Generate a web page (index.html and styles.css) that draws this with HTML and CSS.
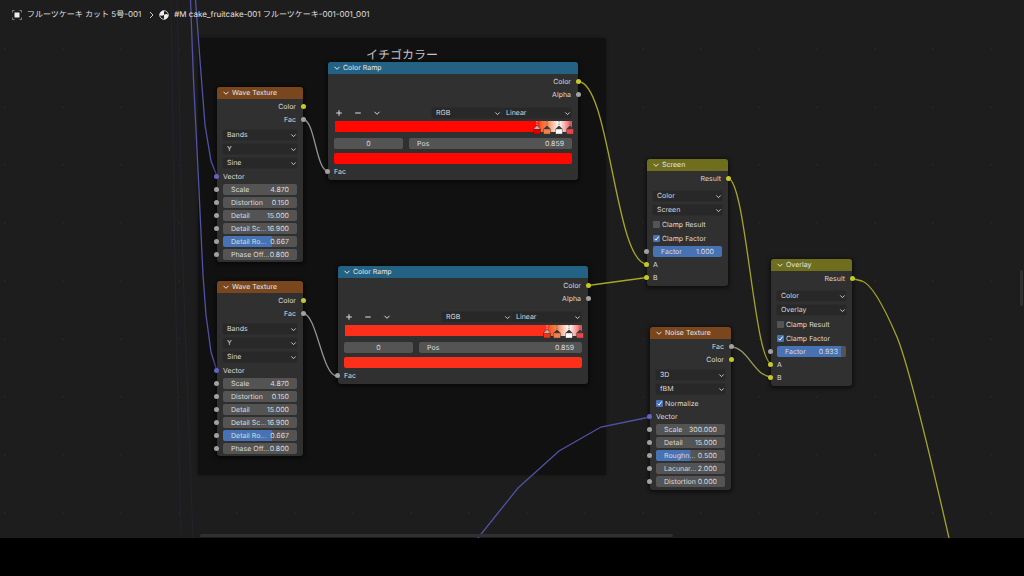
FILE: index.html
```html
<!DOCTYPE html>
<html lang="ja">
<head>
<meta charset="utf-8">
<title>Shader Editor</title>
<link rel="stylesheet" href="styles.css">
</head>
<body>
<svg class="defs" aria-hidden="true">
  <symbol id="chev" viewBox="0 0 8 8"><path d="M1.5 2.8 4 5.3 6.5 2.8" fill="none" stroke="currentColor" stroke-width="1"/></symbol>
  <symbol id="plus" viewBox="0 0 8 8"><path d="M4 1.2v5.6M1.2 4h5.6" stroke="currentColor" stroke-width="1"/></symbol>
  <symbol id="minus" viewBox="0 0 8 8"><path d="M1.2 4h5.6" stroke="currentColor" stroke-width="1"/></symbol>
  <symbol id="stop" viewBox="0 0 8 14"><path d="M4 0v6" stroke="#666" stroke-width=".8" stroke-dasharray="1.5 1"/><path d="M4 4.5 7.6 8v5.2H.4V8z" fill="#3a3a3a"/><path d="M.8 8.2h6.4v4.6H.8z" fill="currentColor"/></symbol>
  <symbol id="stop-on" viewBox="0 0 8 14"><path d="M4 0v6" stroke="#ddd" stroke-width=".8" stroke-dasharray="1.5 1"/><path d="M4 4.2 7.6 8v5.2H.4V8z" fill="#222"/><path d="M4 4.5 7.2 8H.8z" fill="#b5b5b5"/><path d="M.8 8.2h6.4v4.6H.8z" fill="currentColor"/></symbol>
</svg>
<main class="canvas">
  <section class="frame" aria-label="イチゴカラー"><h2>イチゴカラー</h2></section>

  <svg class="links" aria-hidden="true">
    <defs>
      <linearGradient id="mix" x1="0" x2="1"><stop offset="0" stop-color="#929292"/><stop offset="1" stop-color="#a5a528"/></linearGradient>
    </defs>
    <g class="ghost"><path d="M171 0 175 270 181 538"/><path d="M177 0 179 80 183 270 193 538"/></g>
    <g class="vector">
      <path d="M190.500 0 193.500 80 199 190 203 275 206 315 211 352 217 371"/>
      <path d="M195.500 0 201.500 80 205 125 211 161 217 176"/>
      <path d="M478 538 518 488 559 451 601 427 650 417"/>
    </g>
    <g class="value">
      <path d="M303 119.500C315 119.500 316 171 328 171"/>
      <path d="M303 313.500C317 313.500 322 376 337 376"/>
      <path d="M731 347C748 347 754 377 772 377" stroke="url(#mix)"/>
    </g>
    <g class="color">
      <path d="M578 81.500C610 81.500 615 264 647 264"/>
      <path d="M588 285.500 647 277.500"/>
      <path d="M728 178.500C746 178.500 754 364 772 364"/>
      <path d="M852 278.500 862 281C872 284 885 309 897 337 907 361 930 455 949 538"/>
    </g>
  </svg>

  <nav class="path" aria-label="パス">
    <svg class="path-icon" viewBox="0 0 10 10"><path d="M2.500 2.500h5v5h-5z" fill="#eee"/><path d="M.5 2.500v-2h2M7.500.5h2v2M9.500 7.500v2h-2M2.500 9.500h-2v-2" fill="none" stroke="#aaa" stroke-width=".7"/></svg>
    <span>フルーツケーキ カット 5号-001</span>
    <svg class="path-sep" viewBox="0 0 5 8"><path d="M1 1 4 4 1 7" fill="none" stroke="#ccc"/></svg>
    <svg class="path-icon" viewBox="0 0 10 10"><circle cx="5" cy="5" r="4.300" fill="#1d1d1d" stroke="#eee" stroke-width=".8"/><path d="M5 .7A4.300 4.300 0 0 0 .7 5C2 6 3.500 6 5 5z" fill="#eee"/><path d="M5 5c1.500-1.300 3-1.200 4.300 0A4.300 4.300 0 0 1 5 9.300z" fill="#eee"/></svg>
    <span>#M cake_fruitcake-001 フルーツケーキ-001-001_001</span>
  </nav>

  <article class="node wave wave-a">
    <h3 class="texture"><svg class="ic"><use href="#chev"/></svg>Wave Texture</h3>
    <p class="row out"><i class="dot yellow"></i>Color</p>
    <p class="row out"><i class="dot"></i>Fac</p>
    <div class="menus">
      <label class="menu"><select aria-label="Wave type"><option>Bands</option></select><svg class="ic"><use href="#chev"/></svg></label>
      <label class="menu"><select aria-label="Direction"><option>Y</option></select><svg class="ic"><use href="#chev"/></svg></label>
      <label class="menu"><select aria-label="Profile"><option>Sine</option></select><svg class="ic"><use href="#chev"/></svg></label>
    </div>
    <p class="row"><i class="dot purple"></i>Vector</p>
    <div class="row"><i class="dot"></i><label class="field">Scale<input value="4.870"></label></div>
    <div class="row"><i class="dot"></i><label class="field">Distortion<input value="0.150"></label></div>
    <div class="row"><i class="dot"></i><label class="field">Detail<input value="15.000"></label></div>
    <div class="row"><i class="dot"></i><label class="field">Detail Sc...<input value="16.900"></label></div>
    <div class="row"><i class="dot"></i><label class="field" style="--fill:66.7%">Detail Ro...<input value="0.667"></label></div>
    <div class="row"><i class="dot"></i><label class="field">Phase Off...<input value="0.800"></label></div>
  </article>

  <article class="node wave wave-b">
    <h3 class="texture"><svg class="ic"><use href="#chev"/></svg>Wave Texture</h3>
    <p class="row out"><i class="dot yellow"></i>Color</p>
    <p class="row out"><i class="dot"></i>Fac</p>
    <div class="menus">
      <label class="menu"><select aria-label="Wave type"><option>Bands</option></select><svg class="ic"><use href="#chev"/></svg></label>
      <label class="menu"><select aria-label="Direction"><option>Y</option></select><svg class="ic"><use href="#chev"/></svg></label>
      <label class="menu"><select aria-label="Profile"><option>Sine</option></select><svg class="ic"><use href="#chev"/></svg></label>
    </div>
    <p class="row"><i class="dot purple"></i>Vector</p>
    <div class="row"><i class="dot"></i><label class="field">Scale<input value="4.870"></label></div>
    <div class="row"><i class="dot"></i><label class="field">Distortion<input value="0.150"></label></div>
    <div class="row"><i class="dot"></i><label class="field">Detail<input value="15.000"></label></div>
    <div class="row"><i class="dot"></i><label class="field">Detail Sc...<input value="16.900"></label></div>
    <div class="row"><i class="dot"></i><label class="field" style="--fill:66.7%">Detail Ro...<input value="0.667"></label></div>
    <div class="row"><i class="dot"></i><label class="field">Phase Off...<input value="0.800"></label></div>
  </article>

  <article class="node ramp ramp-a">
    <h3 class="converter"><svg class="ic"><use href="#chev"/></svg>Color Ramp</h3>
    <p class="row out"><i class="dot yellow"></i>Color</p>
    <p class="row out"><i class="dot"></i>Alpha</p>
    <div class="tools">
      <button aria-label="Add stop"><svg class="ic"><use href="#plus"/></svg></button>
      <button aria-label="Remove stop"><svg class="ic"><use href="#minus"/></svg></button>
      <button aria-label="Ramp tools"><svg class="ic"><use href="#chev"/></svg></button>
      <div class="pair">
        <label class="menu"><select aria-label="Color mode"><option>RGB</option></select><svg class="ic"><use href="#chev"/></svg></label>
        <label class="menu"><select aria-label="Interpolation"><option>Linear</option></select><svg class="ic"><use href="#chev"/></svg></label>
      </div>
    </div>
    <div class="bar">
      <svg class="stop" style="left:85.4%;color:#e00000"><use href="#stop-on"/></svg>
      <svg class="stop" style="left:89.3%;color:#f57f4c"><use href="#stop"/></svg>
      <svg class="stop" style="left:94.5%;color:#ffffff"><use href="#stop"/></svg>
      <svg class="stop" style="left:99.2%;color:#f04545"><use href="#stop"/></svg>
    </div>
    <div class="pos"><input class="index" aria-label="Active stop" value="0"><label class="field">Pos<input value="0.859"></label></div>
    <input class="swatch" type="color" aria-label="Stop color" value="#fe0800">
    <p class="row"><i class="dot"></i>Fac</p>
  </article>

  <article class="node ramp ramp-b">
    <h3 class="converter"><svg class="ic"><use href="#chev"/></svg>Color Ramp</h3>
    <p class="row out"><i class="dot yellow"></i>Color</p>
    <p class="row out"><i class="dot"></i>Alpha</p>
    <div class="tools">
      <button aria-label="Add stop"><svg class="ic"><use href="#plus"/></svg></button>
      <button aria-label="Remove stop"><svg class="ic"><use href="#minus"/></svg></button>
      <button aria-label="Ramp tools"><svg class="ic"><use href="#chev"/></svg></button>
      <div class="pair">
        <label class="menu"><select aria-label="Color mode"><option>RGB</option></select><svg class="ic"><use href="#chev"/></svg></label>
        <label class="menu"><select aria-label="Interpolation"><option>Linear</option></select><svg class="ic"><use href="#chev"/></svg></label>
      </div>
    </div>
    <div class="bar">
      <svg class="stop" style="left:85.4%;color:#f0301c"><use href="#stop-on"/></svg>
      <svg class="stop" style="left:89.3%;color:#f57f4c"><use href="#stop"/></svg>
      <svg class="stop" style="left:94.5%;color:#ffffff"><use href="#stop"/></svg>
      <svg class="stop" style="left:99.2%;color:#f04545"><use href="#stop"/></svg>
    </div>
    <div class="pos"><input class="index" aria-label="Active stop" value="0"><label class="field">Pos<input value="0.859"></label></div>
    <input class="swatch" type="color" aria-label="Stop color" value="#fb2f1a">
    <p class="row"><i class="dot"></i>Fac</p>
  </article>

  <article class="node mix screen">
    <h3 class="blend"><svg class="ic"><use href="#chev"/></svg>Screen</h3>
    <p class="row out"><i class="dot yellow"></i>Result</p>
    <div class="menus">
      <label class="menu"><select aria-label="Data type"><option>Color</option></select><svg class="ic"><use href="#chev"/></svg></label>
      <label class="menu"><select aria-label="Blend mode"><option>Screen</option></select><svg class="ic"><use href="#chev"/></svg></label>
    </div>
    <label class="check"><input type="checkbox">Clamp Result</label>
    <label class="check"><input type="checkbox" checked>Clamp Factor</label>
    <div class="row"><i class="dot"></i><label class="field" style="--fill:100%">Factor<input value="1.000"></label></div>
    <p class="row"><i class="dot yellow"></i>A</p>
    <p class="row"><i class="dot yellow"></i>B</p>
  </article>

  <article class="node mix overlay">
    <h3 class="blend"><svg class="ic"><use href="#chev"/></svg>Overlay</h3>
    <p class="row out"><i class="dot yellow"></i>Result</p>
    <div class="menus">
      <label class="menu"><select aria-label="Data type"><option>Color</option></select><svg class="ic"><use href="#chev"/></svg></label>
      <label class="menu"><select aria-label="Blend mode"><option>Overlay</option></select><svg class="ic"><use href="#chev"/></svg></label>
    </div>
    <label class="check"><input type="checkbox">Clamp Result</label>
    <label class="check"><input type="checkbox" checked>Clamp Factor</label>
    <div class="row"><i class="dot"></i><label class="field" style="--fill:93.3%">Factor<input value="0.933"></label></div>
    <p class="row"><i class="dot yellow"></i>A</p>
    <p class="row"><i class="dot yellow"></i>B</p>
  </article>

  <article class="node noise">
    <h3 class="texture"><svg class="ic"><use href="#chev"/></svg>Noise Texture</h3>
    <p class="row out"><i class="dot"></i>Fac</p>
    <p class="row out"><i class="dot yellow"></i>Color</p>
    <div class="menus">
      <label class="menu"><select aria-label="Dimensions"><option>3D</option></select><svg class="ic"><use href="#chev"/></svg></label>
      <label class="menu"><select aria-label="Noise type"><option>fBM</option></select><svg class="ic"><use href="#chev"/></svg></label>
    </div>
    <label class="check"><input type="checkbox" checked>Normalize</label>
    <p class="row"><i class="dot purple"></i>Vector</p>
    <div class="row"><i class="dot"></i><label class="field">Scale<input value="300.000"></label></div>
    <div class="row"><i class="dot"></i><label class="field">Detail<input value="15.000"></label></div>
    <div class="row"><i class="dot"></i><label class="field" style="--fill:50%">Roughn...<input value="0.500"></label></div>
    <div class="row"><i class="dot"></i><label class="field">Lacunar...<input value="2.000"></label></div>
    <div class="row"><i class="dot"></i><label class="field">Distortion<input value="0.000"></label></div>
  </article>

  <div class="scroll-x"></div>
  <div class="scroll-y"></div>
</main>
<footer class="strip"></footer>
</body>
</html>
```
FILE: styles.css
```css
* { box-sizing: border-box; }
body {
  margin: 0;
  min-height: 100vh;
  display: flex;
  flex-direction: column;
  background: #000;
  color: #dcdcdc;
  font: 7px/13px Inter, "Noto Sans CJK JP", sans-serif;
  text-rendering: geometricPrecision;
}
h2, h3, p { margin: 0; font-weight: 400; }
input, select, button {
  appearance: none;
  margin: 0;
  padding: 0;
  border: 0;
  background: none;
  color: inherit;
  font: inherit;
  text-rendering: inherit;
  min-width: 0;
}
.defs { position: absolute; width: 0; height: 0; }
.canvas {
  position: relative;
  flex: 1;
  overflow: hidden;
  background: radial-gradient(circle at 1px 1px, #242424 1px, transparent 1px) 4px 48px / 58px 58px #1d1d1d;
}
.strip { height: 38px; background: #000; }
.links { position: absolute; inset: 0; width: 100%; height: 100%; fill: none; stroke-width: 1.3; }
.ghost { stroke: #22222b; }
.vector { stroke: #5252a4; }
.value { stroke: #929292; }
.color { stroke: #a5a528; }

.path {
  position: relative;
  display: flex;
  align-items: center;
  gap: 5px;
  padding: 8px 12px;
  font-size: 8px;
  color: #e0e0e0;
}
.path-icon { width: 10px; height: 10px; }
.path-sep { width: 5px; height: 8px; margin-left: 3px; }

.frame {
  position: absolute;
  left: 198px;
  top: 38px;
  width: 408px;
  height: 437px;
  padding-top: 10px;
  border-radius: 2px;
  background: #111;
  box-shadow: 0 0 3px #111;
}
.frame h2 { font-size: 12px; line-height: 14px; text-align: center; color: #c4c4c4; }

.node {
  position: absolute;
  padding-bottom: 2px;
  border-radius: 3px;
  background: #303030;
  box-shadow: 0 1px 4px 1px rgba(0, 0, 0, .6);
}
.wave { left: 217px; width: 86px; padding-bottom: 1px; }
.wave-a { top: 87px; }
.wave-b { top: 281px; }
.ramp { width: 250px; }
.ramp-a { left: 328px; top: 62px; }
.ramp-b { left: 338px; top: 266px; }
.mix { width: 81px; }
.screen { left: 647px; top: 159px; }
.overlay { left: 771px; top: 259px; }
.noise { left: 650px; top: 327px; width: 81px; }

.node h3 {
  display: flex;
  align-items: center;
  gap: 2px;
  height: 12px;
  margin-bottom: 1px;
  padding: 0 0 1px 5px;
  border-radius: 3px 3px 0 0;
  font-size: 7px;
  line-height: 11px;
  color: #e8e8e8;
}
.texture { background: #79461d; }
.converter { background: #246283; }
.blend { background: #6e6e1d; }
.ic { width: 8px; height: 8px; flex: none; }

.row { position: relative; display: flex; align-items: center; height: 13px; padding: 0 6px; }
.out { justify-content: flex-end; padding-right: 7px; }
.dot {
  position: absolute;
  left: -3px;
  top: 4px;
  width: 5px;
  height: 5px;
  border-radius: 50%;
  background: #a1a1a1;
}
.out .dot { left: auto; right: -3px; }
.yellow { background: #c7c729; }
.purple { background: #6363c7; }

.menus { display: grid; gap: 4px; padding: 4px 6px 2px; }
.mix .menus { padding-top: 6px; }
.menu {
  display: grid;
  align-items: center;
  height: 10px;
  border-radius: 2px;
  background: #282828;
  box-shadow: 0 0 0 1px #2c2c2c;
}
.menu select { grid-area: 1 / 1; padding-left: 4px; line-height: 10px; }
.menu .ic { grid-area: 1 / 1; justify-self: end; width: 7px; height: 7px; pointer-events: none; }

.field {
  flex: 1;
  display: flex;
  align-items: center;
  height: 11px;
  padding: 0 8px;
  border-radius: 2px;
  white-space: nowrap;
  background: linear-gradient(#4772b3, #4772b3) 0 0 / var(--fill, 0%) 100% no-repeat #545454;
}
.field input { flex: 1; width: 0; height: 11px; text-align: right; }

.check { display: flex; align-items: center; gap: 2px; height: 14px; padding: 0 6px; }
.check input { width: 7px; height: 7px; border-radius: 1px; background: #545454; }
.check input:checked {
  background: #4772b3 url("data:image/svg+xml,%3Csvg xmlns='http://www.w3.org/2000/svg' viewBox='0 0 7 7'%3E%3Cpath d='M1.500 3.700 3 5.200 5.700 1.500' fill='none' stroke='white'/%3E%3C/svg%3E");
}

.tools { display: flex; align-items: center; gap: 11px; margin: 6px 7px 0; height: 12px; }
.tools button { display: flex; width: 8px; height: 8px; }
.pair { display: grid; grid-template-columns: 1fr 1fr; gap: 1px; width: 139px; margin-left: auto; }
.bar {
  position: relative;
  height: 11px;
  margin: 2px 6px 0 7px;
}
.ramp-a .bar { background: linear-gradient(90deg, #fe0800 85.4%, #f8632f 87%, #f57f4c 89.3%, #fff 94.5%, #f04545); }
.ramp-b .bar { background: linear-gradient(90deg, #fb2f1a 85.4%, #f8632f 87%, #f57f4c 89.3%, #fff 94.5%, #f04545); }
.stop { position: absolute; top: 0; width: 8px; height: 14px; margin-left: -4px; }
.pos { display: flex; gap: 6px; margin: 6px 6px 0; }
.index { width: 69px; height: 11px; border-radius: 2px; background: #545454; text-align: center; }
.swatch { display: block; width: calc(100% - 12px); height: 11px; margin: 4px 6px 1px; }
.swatch::-webkit-color-swatch-wrapper { padding: 0; }
.swatch::-webkit-color-swatch { border: 0; border-radius: 2px; }

.scroll-x { position: absolute; left: 200px; right: 351px; bottom: 1px; height: 3px; border-radius: 2px; background: #303030; }
.scroll-y { position: absolute; right: 1px; top: 270px; width: 3px; height: 36px; border-radius: 2px; background: #303030; }
```
